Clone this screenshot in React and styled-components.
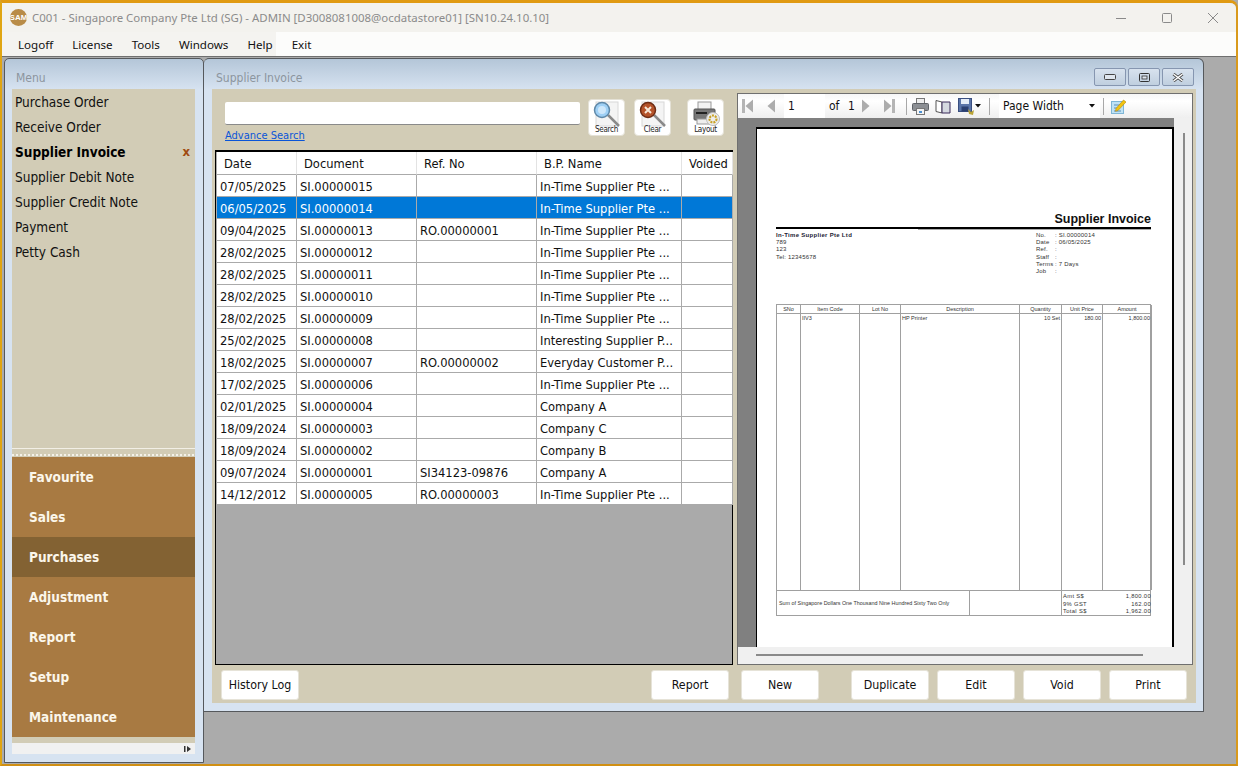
import React from 'react';
import styled, { createGlobalStyle } from 'styled-components';

const GlobalStyle = createGlobalStyle`
  html, body {
    margin: 0;
    padding: 0;
    background: #ababab;
    overflow: hidden;
  }
  * {
    box-sizing: border-box;
  }
  body {
    font-family: 'DejaVu Sans', 'Noto Sans', sans-serif;
    font-stretch: condensed;
  }
`;

const Desktop = styled.div`
  width: 1238px;
  height: 766px;
  display: flex;
  flex-direction: column;
  background: #ababab;
  border-top: 3px solid #e09a12;
  border-left: 2px solid #e0a512;
  border-right: 2px solid #d99a1c;
  border-bottom: 2px solid #d08f14;
  border-top-right-radius: 8px;
  overflow: hidden;
`;

const TitleBar = styled.div`
  height: 29px;
  flex: none;
  display: flex;
  align-items: center;
  background: #f3f2ee;
  padding-left: 8px;
`;

const AppLogo = styled.div`
  width: 17px;
  height: 17px;
  border-radius: 50%;
  background: #b98c48;
  color: #fff;
  font: bold 8px 'Liberation Sans', sans-serif;
  font-stretch: normal;
  display: flex;
  align-items: center;
  justify-content: center;
  overflow: hidden;
  margin-right: 5px;
`;

const TitleText = styled.div`
  font-family: 'Noto Sans', sans-serif;
  font-stretch: normal;
  font-size: 11.45px;
  color: #8b8b8b;
  flex: 1;
  white-space: nowrap;
`;

const WinControl = styled.div`
  width: 46px;
  height: 29px;
  display: flex;
  align-items: center;
  justify-content: center;
  svg {
    display: block;
  }
`;

const MenuBar = styled.div`
  height: 25px;
  flex: none;
  display: flex;
  align-items: center;
  background: linear-gradient(90deg, #f4f3f0 0, #f4f3f0 274px, #fcfcfb 274px);
  border-bottom: 1px solid #6f6f6f;
  padding-left: 16px;
  gap: 19px;
`;

const MenuItem = styled.span`
  font-family: 'Noto Sans', sans-serif;
  font-stretch: normal;
  font-size: 11.6px;
  color: #111;
`;

const Workspace = styled.div`
  flex: 1;
  display: flex;
  align-items: flex-start;
  padding-left: 2px;
  min-height: 0;
`;

const SidePane = styled.div`
  width: 200px;
  height: 705px;
  margin-top: 1px;
  display: flex;
  flex-direction: column;
  padding: 0 8px 7px 7px;
  background: linear-gradient(180deg, #b4c6d8 0, #d7e3f1 31px, #d7e3f1 100%);
  border: 1px solid #55585c;
  border-top-left-radius: 5px;
  border-top-right-radius: 5px;
`;

const PaneTitle = styled.div`
  height: 30px;
  flex: none;
  display: flex;
  align-items: center;
  padding-top: 8px;
  padding-left: 4px;
  font-size: 12px;
  color: #8c959e;
`;

const NavList = styled.div`
  height: 360px;
  flex: none;
  background: #d2ccb6;
  border-bottom: 1px solid #f2efe6;
`;

const NavRow = styled.div`
  height: 25px;
  display: flex;
  align-items: center;
  justify-content: space-between;
  padding: 0 5px 0 3px;
  font-size: 13.5px;
  font-weight: ${(props) => (props.$active ? 'bold' : 'normal')};
  color: ${(props) => (props.$active ? '#000' : '#111')};
`;

const CloseMark = styled.span`
  color: #a04a10;
  font-size: 13px;
  font-weight: bold;
`;

const Grip = styled.div`
  height: 8px;
  flex: none;
  background-color: #d2ccb6;
  background-image: repeating-linear-gradient(90deg, #f4f2ea 0, #f4f2ea 2px, transparent 2px, transparent 4px);
  background-size: 100% 2px;
  background-position: 0 5px;
  background-repeat: no-repeat;
`;

const Accordion = styled.div`
  flex: none;
`;

const AccordionRow = styled.div`
  height: 40px;
  display: flex;
  align-items: center;
  padding-left: 17px;
  font-size: 13.5px;
  font-weight: bold;
  color: #fbf6ea;
  background: ${(props) => (props.$active ? '#836233' : '#a87a42')};
`;

const SideScroll = styled.div`
  height: 11px;
  background: #f1f1f1;
  display: flex;
  align-items: center;
  justify-content: flex-end;
  padding-right: 3px;
  svg {
    display: block;
  }
`;

const SideScrollWrap = styled.div`
  height: 6px;
  background: #d2ccb6;
`;

const MainWindow = styled.div`
  width: 1000px;
  height: 654px;
  margin-top: 1px;
  display: flex;
  flex-direction: column;
  padding: 0 7px 8px 8px;
  background: linear-gradient(180deg, #b4c6d8 0, #d7e3f1 31px, #d7e3f1 100%);
  border: 1px solid #55585c;
  border-left: 0;
  border-top-right-radius: 6px;
  border-top-left-radius: 5px;
`;

const MainHeader = styled.div`
  height: 30px;
  flex: none;
  display: flex;
  align-items: center;
  justify-content: space-between;
  padding-left: 4px;
`;

const MainTitle = styled.div`
  font-size: 12px;
  color: #8c959e;
  padding-top: 8px;
`;

const MdiButtons = styled.div`
  display: flex;
  gap: 2px;
  padding-right: 2px;
  padding-top: 6px;
`;

const MdiButton = styled.div`
  width: 32px;
  height: 18px;
  border: 1px solid #8696b0;
  border-radius: 2px;
  background: linear-gradient(180deg, #d8e2ee, #c0cfdf);
  display: flex;
  align-items: center;
  justify-content: center;
`;

const Content = styled.div`
  flex: 1;
  display: flex;
  flex-direction: column;
  background: #d2ccb6;
  min-height: 0;
`;

const ContentTop = styled.div`
  height: 572px;
  flex: none;
  margin-top: 4px;
  display: flex;
`;

const ListColumn = styled.div`
  width: 525px;
  flex: none;
  display: flex;
  flex-direction: column;
`;

const SearchArea = styled.div`
  height: 57px;
  flex: none;
  display: flex;
  padding-left: 13px;
`;

const SearchField = styled.div`
  width: 355px;
  margin-top: 9px;
`;

const SearchInput = styled.div`
  height: 23px;
  background: #fff;
  border-bottom: 1px solid #8a8a8a;
  border-radius: 2px;
`;

const AdvanceLink = styled.a`
  display: block;
  margin-top: 4px;
  font-size: 11px;
  color: #0a55d8;
  text-decoration: underline;
`;

const IconButton = styled.div`
  width: 37px;
  height: 37px;
  margin-top: 6px;
  margin-left: ${(props) => props.$gap}px;
  border-radius: 4px;
  background: #fff;
  border: 1px solid #e4e1d6;
  display: flex;
  flex-direction: column;
  align-items: center;
  overflow: hidden;
  svg {
    display: block;
    flex: none;
  }
`;

const IconLabel = styled.span`
  font: 8px/9px 'DejaVu Sans', sans-serif;
  font-stretch: condensed;
  letter-spacing: -0.3px;
  color: #222;
  margin-top: -3px;
`;

const GridFrame = styled.div`
  width: 518px;
  height: 515px;
  margin-left: 3px;
  border: 1px solid #000;
  border-top-width: 2px;
  background: #aaaaaa;
  padding-left: 1px;
`;

const Table = styled.table`
  width: 516px;
  table-layout: fixed;
  border-collapse: separate;
  border-spacing: 0;
  font-size: 12.8px;
`;

const HeadCell = styled.th`
  height: 23px;
  background: #fff;
  font-weight: normal;
  text-align: left;
  padding: 0 0 0 7px;
  color: #111;
  border-right: 1px solid #e3e3e3;
  border-bottom: 1px solid #aaa;
  white-space: nowrap;
  overflow: hidden;
`;

const Cell = styled.td`
  height: 22px;
  padding: 1px 0 0 3px;
  white-space: nowrap;
  overflow: hidden;
  background: ${(props) => (props.$selected ? '#0078d7' : '#fff')};
  color: ${(props) => (props.$selected ? '#fff' : '#111')};
  border-right: 1px solid #aaa;
  border-bottom: 1px solid #aaa;
`;

const Viewer = styled.div`
  width: 456px;
  height: 572px;
  flex: none;
  display: flex;
  flex-direction: column;
  border: 1px solid #6f6f6f;
  background: #f0f0f0;
`;

const ViewerBar = styled.div`
  height: 24px;
  flex: none;
  display: flex;
  align-items: center;
  background: linear-gradient(180deg, #f6f6f6, #fff 30%, #efefef);
  font-size: 12px;
  color: #111;
  svg {
    display: block;
    flex: none;
  }
`;

const ToolSlot = styled.div`
  width: ${(props) => props.$w}px;
  margin-left: ${(props) => props.$ml || 0}px;
  flex: none;
  display: flex;
  align-items: center;
`;

const PageInput = styled.div`
  width: 41px;
  height: 24px;
  background: #fff;
  margin-left: 8px;
  padding-left: 4px;
  line-height: 24px;
`;

const ToolSep = styled.div`
  width: 1px;
  height: 17px;
  flex: none;
  background: #a8a8a8;
  margin-left: ${(props) => props.$ml || 0}px;
`;

const ZoomSelect = styled.div`
  width: 101px;
  height: 24px;
  margin-left: 9px;
  background: #fff;
  display: flex;
  align-items: center;
  justify-content: space-between;
  padding: 0 5px 0 4px;
`;

const ViewerBody = styled.div`
  flex: 1;
  display: flex;
  min-height: 0;
`;

const PageArea = styled.div`
  width: 436px;
  flex: none;
  background: #808080;
  padding: 9px 0 0 18px;
`;

const InvoicePage = styled.div`
  width: 418px;
  height: 521px;
  background: #fff;
  border-top: 2px solid #000;
  border-left: 1px solid #000;
  border-right: 2px solid #000;
  padding: 82px 21px 0 19px;
  font: 6px/7px 'Liberation Sans', sans-serif;
  font-stretch: normal;
  letter-spacing: 0.2px;
  color: #333;
  overflow: hidden;
`;

const InvoiceTitle = styled.div`
  font: bold 12.5px/16px 'Liberation Sans', sans-serif;
  font-stretch: normal;
  letter-spacing: 0;
  color: #111;
  text-align: right;
`;

const TitleRule = styled.div`
  height: 3px;
  background: linear-gradient(#000 0, #000 2px, transparent 2px), linear-gradient(90deg, transparent 38%, #aaa 38%);
`;

const InfoRow = styled.div`
  height: 74px;
  display: flex;
  justify-content: space-between;
  padding-top: 2px;
`;

const SupplierName = styled.div`
  font-weight: bold;
  color: #223;
  letter-spacing: 0.3px;
`;

const AddressLine = styled.div`
  height: ${(props) => props.$h || 7}px;
`;

const MetaBlock = styled.div`
  width: 115px;
  display: grid;
  grid-template-columns: 19px 1fr;
  grid-auto-rows: 7.2px;
`;

const ReportGrid = styled.div`
  display: grid;
  width: 375px;
  grid-template-columns: 24px 59px 41px 119px 42px 41px 49px;
  grid-template-rows: 9px 276px;
  border: 1px solid #a0a0a0;
  border-bottom: 0;
`;

const ReportHead = styled.div`
  border-right: 1px solid #a0a0a0;
  border-bottom: 1px solid #a0a0a0;
  text-align: center;
  line-height: 8px;
  font-size: 5.5px;
  letter-spacing: 0;
`;

const ReportCell = styled.div`
  border-right: 1px solid #a0a0a0;
  padding: 1px 1px;
  font-size: 5.5px;
  letter-spacing: 0;
  text-align: ${(props) => props.$align || 'left'};
`;

const ReportFoot = styled.div`
  display: grid;
  width: 375px;
  height: 26px;
  grid-template-columns: 193px 92px 90px;
  border: 1px solid #a0a0a0;
`;

const FootWords = styled.div`
  display: flex;
  align-items: center;
  padding-left: 2px;
  font-size: 5.4px;
  letter-spacing: 0;
  border-right: 1px solid #a0a0a0;
  white-space: nowrap;
`;

const FootBlank = styled.div`
  border-right: 1px solid #a0a0a0;
`;

const FootTotals = styled.div`
  display: grid;
  grid-template-columns: 1fr auto;
  grid-auto-rows: 7.5px;
  padding: 2px 1px 0 1px;
  font-size: 5.8px;
  letter-spacing: 0.35px;
`;

const TotalValue = styled.span`
  text-align: right;
`;

const VScrollStrip = styled.div`
  flex: 1;
  background: #f0f0f0;
  padding: 15px 0 0 9px;
`;

const VThumb = styled.div`
  width: 2px;
  height: 432px;
  background: #8a8a8a;
`;

const HScrollStrip = styled.div`
  height: 17px;
  flex: none;
  background: #f0f0f0;
  padding: 7px 0 0 18px;
`;

const HThumb = styled.div`
  width: 387px;
  height: 2px;
  background: #8a8a8a;
`;

const FooterBar = styled.div`
  flex: 1;
  display: flex;
  align-items: flex-start;
  padding: 5px 9px 0 9px;
`;

const ActionButton = styled.div`
  width: 78px;
  height: 30px;
  margin-left: ${(props) => props.$gap || 0}px;
  background: #fff;
  border: 1px solid #e6e3d8;
  border-radius: 3px;
  font-size: 12.3px;
  color: #111;
  display: flex;
  align-items: center;
  justify-content: center;
`;

const Spacer = styled.div`
  flex: 1;
`;

const invoices = [
  ['07/05/2025', 'SI.00000015', '', 'In-Time Supplier Pte ...'],
  ['06/05/2025', 'SI.00000014', '', 'In-Time Supplier Pte ...'],
  ['09/04/2025', 'SI.00000013', 'RO.00000001', 'In-Time Supplier Pte ...'],
  ['28/02/2025', 'SI.00000012', '', 'In-Time Supplier Pte ...'],
  ['28/02/2025', 'SI.00000011', '', 'In-Time Supplier Pte ...'],
  ['28/02/2025', 'SI.00000010', '', 'In-Time Supplier Pte ...'],
  ['28/02/2025', 'SI.00000009', '', 'In-Time Supplier Pte ...'],
  ['25/02/2025', 'SI.00000008', '', 'Interesting Supplier P...'],
  ['18/02/2025', 'SI.00000007', 'RO.00000002', 'Everyday Customer P...'],
  ['17/02/2025', 'SI.00000006', '', 'In-Time Supplier Pte ...'],
  ['02/01/2025', 'SI.00000004', '', 'Company A'],
  ['18/09/2024', 'SI.00000003', '', 'Company C'],
  ['18/09/2024', 'SI.00000002', '', 'Company B'],
  ['09/07/2024', 'SI.00000001', 'SI34123-09876', 'Company A'],
  ['14/12/2012', 'SI.00000005', 'RO.00000003', 'In-Time Supplier Pte ...'],
];

const navItems = ['Purchase Order', 'Receive Order', 'Supplier Invoice', 'Supplier Debit Note', 'Supplier Credit Note', 'Payment', 'Petty Cash'];
const sections = ['Favourite', 'Sales', 'Purchases', 'Adjustment', 'Report', 'Setup', 'Maintenance'];
const columns = [
  ['Date', 80],
  ['Document', 120],
  ['Ref. No', 120],
  ['B.P. Name', 145],
  ['Voided', 51],
];
const meta = [
  ['No.', ': SI.00000014'],
  ['Date', ': 06/05/2025'],
  ['Ref.', ':'],
  ['Staff', ':'],
  ['Terms', ': 7 Days'],
  ['Job', ':'],
];

const SearchIcon = () => (
  <svg width="35" height="28" viewBox="0 0 35 28">
    <rect x="7" y="2" width="22" height="24" fill="#f4f4f4" stroke="#d8d8d8" />
    <line x1="19" y1="15" x2="30" y2="26" stroke="#8a8a8a" strokeWidth="2.5" />
    <circle cx="13" cy="10" r="7.5" fill="#9fd0f5" stroke="#5f88a8" strokeWidth="1.5" />
    <circle cx="13" cy="10" r="4" fill="#cfe8fb" />
  </svg>
);

const ClearIcon = () => (
  <svg width="35" height="28" viewBox="0 0 35 28">
    <rect x="7" y="2" width="22" height="24" fill="#f4f4f4" stroke="#d8d8d8" />
    <line x1="19" y1="15" x2="30" y2="26" stroke="#8a8a8a" strokeWidth="2.5" />
    <circle cx="13" cy="10" r="7.5" fill="#b5532a" stroke="#6d2c14" strokeWidth="1.5" />
    <path d="M10 7l6 6M16 7l-6 6" stroke="#f7e8d8" strokeWidth="2" />
  </svg>
);

const LayoutIcon = () => (
  <svg width="35" height="28" viewBox="0 0 35 28">
    <rect x="10" y="2" width="13" height="8" fill="#f2f2f2" stroke="#999" />
    <rect x="6" y="9" width="21" height="11" rx="1" fill="#777" stroke="#555" />
    <rect x="8" y="12" width="11" height="2" fill="#222" />
    <rect x="9" y="19" width="14" height="5" fill="#eee" stroke="#999" />
    <circle cx="25" cy="19" r="6.5" fill="#eee" stroke="#bbb" />
    <circle cx="25" cy="19" r="3.5" fill="none" stroke="#c9a227" strokeWidth="2.2" strokeDasharray="2 1" />
  </svg>
);

const NavArrow = ({ dir, bar }) => (
  <svg width="12" height="16" viewBox="0 0 12 16">
    {bar && <rect x={dir === 'left' ? 0 : 9} y="1" width="3" height="14" fill="#b5b5b5" />}
    <path d={dir === 'left' ? 'M11 1.5v13L3.5 8z' : 'M1 1.5v13L8.5 8z'} fill="#adadad" />
  </svg>
);

const PrinterIcon = () => (
  <svg width="17" height="17" viewBox="0 0 17 17">
    <rect x="4.5" y="0.5" width="8" height="5" fill="#eee" stroke="#777" />
    <rect x="0.5" y="5.5" width="16" height="7" rx="1" fill="#8c8f94" stroke="#5f6368" />
    <rect x="4.5" y="10.5" width="8" height="6" fill="#f4f4f4" stroke="#777" />
    <rect x="7" y="13" width="3" height="2" fill="#4a8fd0" />
  </svg>
);

const BookIcon = () => (
  <svg width="16" height="15" viewBox="0 0 16 15">
    <path d="M1 1.5l6 1.5v11l-6-1.5z" fill="#fff" stroke="#555" />
    <path d="M7 3h8v11H7z" fill="#d5d9e0" stroke="#3a2a5a" />
  </svg>
);

const SaveIcon = () => (
  <svg width="17" height="17" viewBox="0 0 17 17">
    <rect x="0.5" y="0.5" width="13" height="13" fill="#5a74a8" stroke="#3a4f80" />
    <rect x="3" y="1" width="8" height="5" fill="#e6edf7" />
    <rect x="3.5" y="8.5" width="7" height="5" fill="#2a3f70" />
    <path d="M10 11l3 3 3-2-1 5-4-1z" fill="#b9a335" />
  </svg>
);

const CaretIcon = () => (
  <svg width="6" height="4" viewBox="0 0 6 4">
    <path d="M0 0h6L3 3.5z" fill="#111" />
  </svg>
);

const NoteIcon = () => (
  <svg width="15" height="15" viewBox="0 0 15 15">
    <rect x="0.5" y="2.5" width="12" height="12" fill="#bfe2f5" stroke="#7fb6d6" />
    <path d="M3 6h7M3 9h5M3 12h7" stroke="#5d8fb5" />
    <path d="M5 9.5L12.5 1 15 3 7 11.5l-2.5.8z" fill="#f1c40f" stroke="#b8860b" strokeWidth="0.6" />
  </svg>
);

const App = () => {
  return (
    <>
      <GlobalStyle />
      <Desktop>
        <TitleBar>
          <AppLogo>SAM</AppLogo>
          <TitleText>C001 - Singapore Company Pte Ltd (SG) - ADMIN [D3008081008@ocdatastore01] [SN10.24.10.10]</TitleText>
          <WinControl>
            <svg width="10" height="10" viewBox="0 0 10 10"><path d="M0 5.5h10" stroke="#8a8a8a" /></svg>
          </WinControl>
          <WinControl>
            <svg width="10" height="10" viewBox="0 0 10 10"><rect x="0.5" y="0.5" width="9" height="9" rx="1" fill="none" stroke="#8a8a8a" /></svg>
          </WinControl>
          <WinControl>
            <svg width="10" height="10" viewBox="0 0 10 10"><path d="M0 0l10 10M10 0L0 10" stroke="#8a8a8a" /></svg>
          </WinControl>
        </TitleBar>
        <MenuBar>
          {['Logoff', 'License', 'Tools', 'Windows', 'Help', 'Exit'].map((m) => (
            <MenuItem key={m}>{m}</MenuItem>
          ))}
        </MenuBar>
        <Workspace>
          <SidePane>
            <PaneTitle>Menu</PaneTitle>
            <NavList>
              {navItems.map((item) => (
                <NavRow key={item} $active={item === 'Supplier Invoice'}>
                  {item}
                  {item === 'Supplier Invoice' && <CloseMark>x</CloseMark>}
                </NavRow>
              ))}
            </NavList>
            <Grip />
            <Accordion>
              {sections.map((s) => (
                <AccordionRow key={s} $active={s === 'Purchases'}>{s}</AccordionRow>
              ))}
            </Accordion>
            <SideScrollWrap />
            <SideScroll>
              <svg width="8" height="8" viewBox="0 0 8 8"><path d="M0 1h1.500v6H0zM3 1l4 3-4 3z" fill="#333" /></svg>
            </SideScroll>
          </SidePane>
          <MainWindow>
            <MainHeader>
              <MainTitle>Supplier Invoice</MainTitle>
              <MdiButtons>
                <MdiButton>
                  <svg width="12" height="6" viewBox="0 0 12 6"><rect x="0.5" y="0.5" width="11" height="5" rx="1" fill="#dfe6ee" stroke="#444" /></svg>
                </MdiButton>
                <MdiButton>
                  <svg width="11" height="9" viewBox="0 0 11 9"><rect x="0.5" y="0.5" width="10" height="8" rx="1" fill="none" stroke="#333" /><rect x="3" y="3" width="5" height="3" fill="#dfe6ee" stroke="#333" strokeWidth="0.8" /></svg>
                </MdiButton>
                <MdiButton>
                  <svg width="12" height="9" viewBox="0 0 12 9"><path d="M1.500 1l9 7M10.500 1l-9 7" stroke="#444" strokeWidth="3" /><path d="M1.500 1l9 7M10.500 1l-9 7" stroke="#fff" strokeWidth="1.5" /></svg>
                </MdiButton>
              </MdiButtons>
            </MainHeader>
            <Content>
              <ContentTop>
                <ListColumn>
                  <SearchArea>
                    <SearchField>
                      <SearchInput />
                      <AdvanceLink>Advance Search</AdvanceLink>
                    </SearchField>
                    <IconButton $gap={8}>
                      <SearchIcon />
                      <IconLabel>Search</IconLabel>
                    </IconButton>
                    <IconButton $gap={9}>
                      <ClearIcon />
                      <IconLabel>Clear</IconLabel>
                    </IconButton>
                    <IconButton $gap={16}>
                      <LayoutIcon />
                      <IconLabel>Layout</IconLabel>
                    </IconButton>
                  </SearchArea>
                  <GridFrame>
                    <Table>
                      <colgroup>
                        {columns.map(([name, w]) => (
                          <col key={name} width={w} />
                        ))}
                      </colgroup>
                      <thead>
                        <tr>
                          {columns.map(([name]) => (
                            <HeadCell key={name}>{name}</HeadCell>
                          ))}
                        </tr>
                      </thead>
                      <tbody>
                        {invoices.map((row) => (
                          <tr key={row[1]}>
                            {row.map((val, i) => (
                              <Cell key={i} $selected={row[1] === 'SI.00000014'}>{val}</Cell>
                            ))}
                            <Cell $selected={row[1] === 'SI.00000014'} />
                          </tr>
                        ))}
                      </tbody>
                    </Table>
                  </GridFrame>
                </ListColumn>
                <Viewer>
                  <ViewerBar>
                    <ToolSlot $w={12} $ml={4}><NavArrow dir="left" bar /></ToolSlot>
                    <ToolSlot $w={12} $ml={10}><NavArrow dir="left" /></ToolSlot>
                    <PageInput>1</PageInput>
                    <ToolSlot $w={19} $ml={4}>of</ToolSlot>
                    <ToolSlot $w={13}>1</ToolSlot>
                    <ToolSlot $w={12}><NavArrow dir="right" /></ToolSlot>
                    <ToolSlot $w={12} $ml={10}><NavArrow dir="right" bar /></ToolSlot>
                    <ToolSep $ml={11} />
                    <ToolSlot $w={17} $ml={5}><PrinterIcon /></ToolSlot>
                    <ToolSlot $w={16} $ml={6}><BookIcon /></ToolSlot>
                    <ToolSlot $w={17} $ml={7}><SaveIcon /></ToolSlot>
                    <ToolSlot $w={6}><CaretIcon /></ToolSlot>
                    <ToolSep $ml={8} />
                    <ZoomSelect>
                      Page Width
                      <CaretIcon />
                    </ZoomSelect>
                    <ToolSep $ml={3} />
                    <ToolSlot $w={15} $ml={7}><NoteIcon /></ToolSlot>
                  </ViewerBar>
                  <ViewerBody>
                    <PageArea>
                      <InvoicePage>
                        <InvoiceTitle>Supplier Invoice</InvoiceTitle>
                        <TitleRule />
                        <InfoRow>
                          <div>
                            <SupplierName>In-Time Supplier Pte Ltd</SupplierName>
                            <AddressLine>789</AddressLine>
                            <AddressLine $h={8}>123</AddressLine>
                            <AddressLine>Tel: 12345678</AddressLine>
                          </div>
                          <MetaBlock>
                            {meta.map(([k, v]) => (
                              <React.Fragment key={k}>
                                <span>{k}</span>
                                <span>{v}</span>
                              </React.Fragment>
                            ))}
                          </MetaBlock>
                        </InfoRow>
                        <ReportGrid>
                          {['SNo', 'Item Code', 'Lot No', 'Description', 'Quantity', 'Unit Price', 'Amount'].map((h) => (
                            <ReportHead key={h}>{h}</ReportHead>
                          ))}
                          <ReportCell />
                          <ReportCell>IIV3</ReportCell>
                          <ReportCell />
                          <ReportCell>HP Printer</ReportCell>
                          <ReportCell $align="right">10 Set</ReportCell>
                          <ReportCell $align="right">180.00</ReportCell>
                          <ReportCell $align="right">1,800.00</ReportCell>
                        </ReportGrid>
                        <ReportFoot>
                          <FootWords>Sum of Singapore Dollars One Thousand Nine Hundred Sixty Two Only</FootWords>
                          <FootBlank />
                          <FootTotals>
                            <span>Amt S$</span><TotalValue>1,800.00</TotalValue>
                            <span>9% GST</span><TotalValue>162.00</TotalValue>
                            <span>Total S$</span><TotalValue>1,962.00</TotalValue>
                          </FootTotals>
                        </ReportFoot>
                      </InvoicePage>
                    </PageArea>
                    <VScrollStrip><VThumb /></VScrollStrip>
                  </ViewerBody>
                  <HScrollStrip><HThumb /></HScrollStrip>
                </Viewer>
              </ContentTop>
              <FooterBar>
                <ActionButton>History Log</ActionButton>
                <Spacer />
                <ActionButton>Report</ActionButton>
                <ActionButton $gap={12}>New</ActionButton>
                <ActionButton $gap={32}>Duplicate</ActionButton>
                <ActionButton $gap={8}>Edit</ActionButton>
                <ActionButton $gap={8}>Void</ActionButton>
                <ActionButton $gap={8}>Print</ActionButton>
              </FooterBar>
            </Content>
          </MainWindow>
        </Workspace>
      </Desktop>
    </>
  );
};

export default App;
